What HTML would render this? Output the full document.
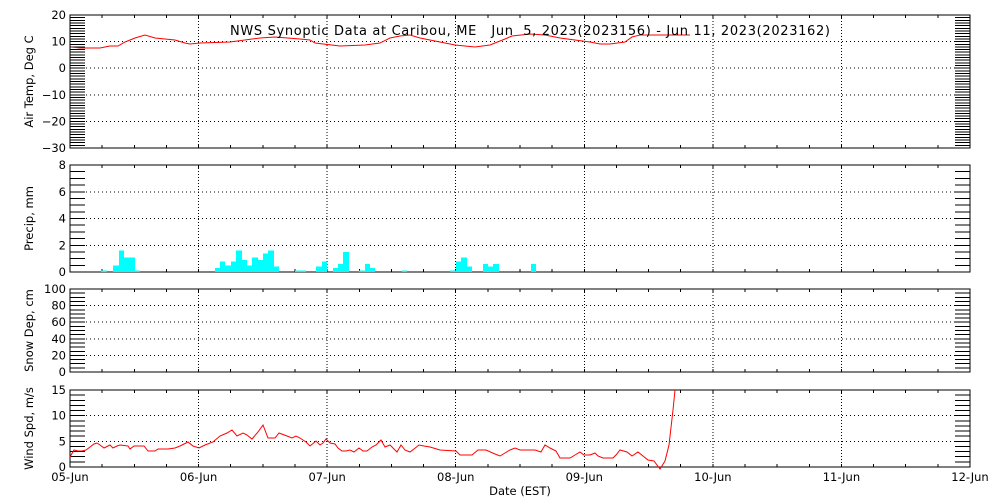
<!DOCTYPE html>
<html><head><meta charset="utf-8"><style>
html,body{margin:0;padding:0;background:#fff;width:1000px;height:500px;overflow:hidden}
svg text{font-family:"DejaVu Sans","Liberation Sans",sans-serif;font-size:11.5px;fill:#000}
</style></head><body>
<svg id="s" width="1000" height="500" xmlns="http://www.w3.org/2000/svg" shape-rendering="crispEdges"></svg>
<script>
var s=document.getElementById('s'),h='';
var X0=70,X1=970,days=['05-Jun','06-Jun','07-Jun','08-Jun','09-Jun','10-Jun','11-Jun','12-Jun'];
function dx(i){return X0+(X1-X0)*i/7;}
function panel(top,bot,vmin,vmax,major,minor,label,grid){
 var sc=(bot-top)/(vmax-vmin);
 function y(v){return bot-(v-vmin)*sc;}
 for(var v=vmin+major;v<vmax-1e-6;v+=major){h+='<line x1="'+X0+'" x2="'+X1+'" y1="'+y(v)+'" y2="'+y(v)+'" stroke="#000" stroke-dasharray="1,3"/>';}
 for(var i=1;i<7;i++)h+='<line x1="'+dx(i)+'" x2="'+dx(i)+'" y1="'+top+'" y2="'+bot+'" stroke="#000" stroke-dasharray="1,2"/>';
 for(var k=1;k<28;k++){var xx=X0+(X1-X0)*k/28;h+='<line x1="'+xx+'" x2="'+xx+'" y1="'+top+'" y2="'+(top+3)+'" stroke="#000"/><line x1="'+xx+'" x2="'+xx+'" y1="'+(bot-3)+'" y2="'+bot+'" stroke="#000"/>';}
 for(var v=vmin;v<=vmax+1e-6;v+=minor){var yy=y(v);var isM=Math.abs((v-vmin)/major-Math.round((v-vmin)/major))<1e-6;
  h+='<line x1="'+X0+'" x2="'+(X0+15)+'" y1="'+yy+'" y2="'+yy+'" stroke="#000"/><line x1="'+(X1-15)+'" x2="'+X1+'" y1="'+yy+'" y2="'+yy+'" stroke="#000"/>';
  if(isM)h+='<text x="66" y="'+(yy+4)+'" text-anchor="end">'+(v<0?'\u2212'+(-v):v)+'</text>';}
 h+='<rect x="'+X0+'" y="'+top+'" width="'+(X1-X0)+'" height="'+(bot-top)+'" fill="none" stroke="#000"/>';
 var cy=(top+bot)/2;h+='<text transform="translate(33,'+cy+') rotate(-90)" text-anchor="middle">'+label+'</text>';
 return y;
}
panel(15,148,-30,20,10,1,'Air Temp, Deg C');
var py=panel(165,272,0,8,2,0.5,'Precip, mm');
panel(289,372,0,100,20,5,'Snow Dep, cm');
panel(390,467,0,15,5,1,'Wind Spd, m/s');
var bars=[[101,107,.1],[113,119,.5],[119,124,1.6],[124,135,1.1],[135,140,.1],[215,220,.3],[220,225,.8],[225,231,.5],[231,236,.8],[236,242,1.6],[242,247,.9],[247,252,.5],[252,258,1.1],[258,263,.9],[263,268,1.4],[268,274,1.6],[274,279,.4],[295,306,.1],[316,322,.4],[322,327,.8],[333,338,.3],[338,343,.6],[343,349,1.5],[359,365,.1],[365,370,.6],[370,375,.3],[402,407,.1],[450,456,.1],[456,461,.8],[461,467,1.1],[467,472,.4],[483,488,.6],[488,493,.4],[493,499,.6],[531,536,.6]];
bars.forEach(function(b){var t=py(b[2]);h+='<rect x="'+b[0]+'" y="'+t+'" width="'+(b[1]-b[0])+'" height="'+(272-t)+'" fill="#00ffff"/>';});
var temp='71,47 80,48 100,48 110,46 118,46 125,42 135,38 145,35 155,38 165,39 175,40 185,43 190,44 200,43 230,42 260,38 275,37 300,39 310,40 315,43 340,46 365,45 380,43 390,38 400,36 410,35 420,38 435,41 445,43 455,45 475,47 490,45 505,39 512,36 530,34 545,35 560,38 575,40 590,42 600,44 610,44 625,42 632,37 640,35 690,35';
h+='<polyline points="'+temp+'" fill="none" stroke="#f00" shape-rendering="auto"/>';
h+='<text x="230" y="35" textLength="600" lengthAdjust="spacing" style="font-size:13px;white-space:pre" xml:space="preserve">NWS Synoptic Data at Caribou, ME   Jun  5, 2023(2023156) - Jun 11, 2023(2023162)</text>';
var wind='70,457 74,450 78,451 82,451 86,450 90,447 94,444 97,443 100,445 104,448 110,445 113,448 117,446 120,445 128,446 130,449 134,446 144,446 148,451 155,451 158,449 168,449 175,448 180,446 188,442 193,446 199,448 205,445 213,442 220,436 227,433 232,430 237,436 243,433 247,435 252,439 258,432 263,425 268,438 275,438 279,433 287,436 292,438 296,436 300,438 306,442 310,446 316,441 320,445 323,443 326,439 330,443 335,444 338,448 342,451 346,451 350,450 354,452 359,448 363,451 367,451 372,447 376,445 381,440 385,447 390,445 393,448 397,452 401,445 405,450 410,452 414,449 419,445 424,446 430,447 440,450 456,451 460,455 472,455 478,450 486,450 495,454 500,456 510,450 515,448 520,450 535,450 541,452 545,445 550,448 556,451 560,458 570,458 575,455 580,452 584,455 590,455 595,453 598,456 603,458 613,458 616,455 620,450 627,452 632,456 638,452 648,460 654,461 660,469 665,461 669,445 673,410 675,390';
h+='<polyline points="'+wind+'" fill="none" stroke="#f00" shape-rendering="auto"/>';
days.forEach(function(d,i){h+='<text x="'+dx(i)+'" y="481" text-anchor="middle">'+d+'</text>';});
h+='<text x="520" y="495" text-anchor="middle">Date (EST)</text>';
s.innerHTML=h;
</script>
</body></html>
